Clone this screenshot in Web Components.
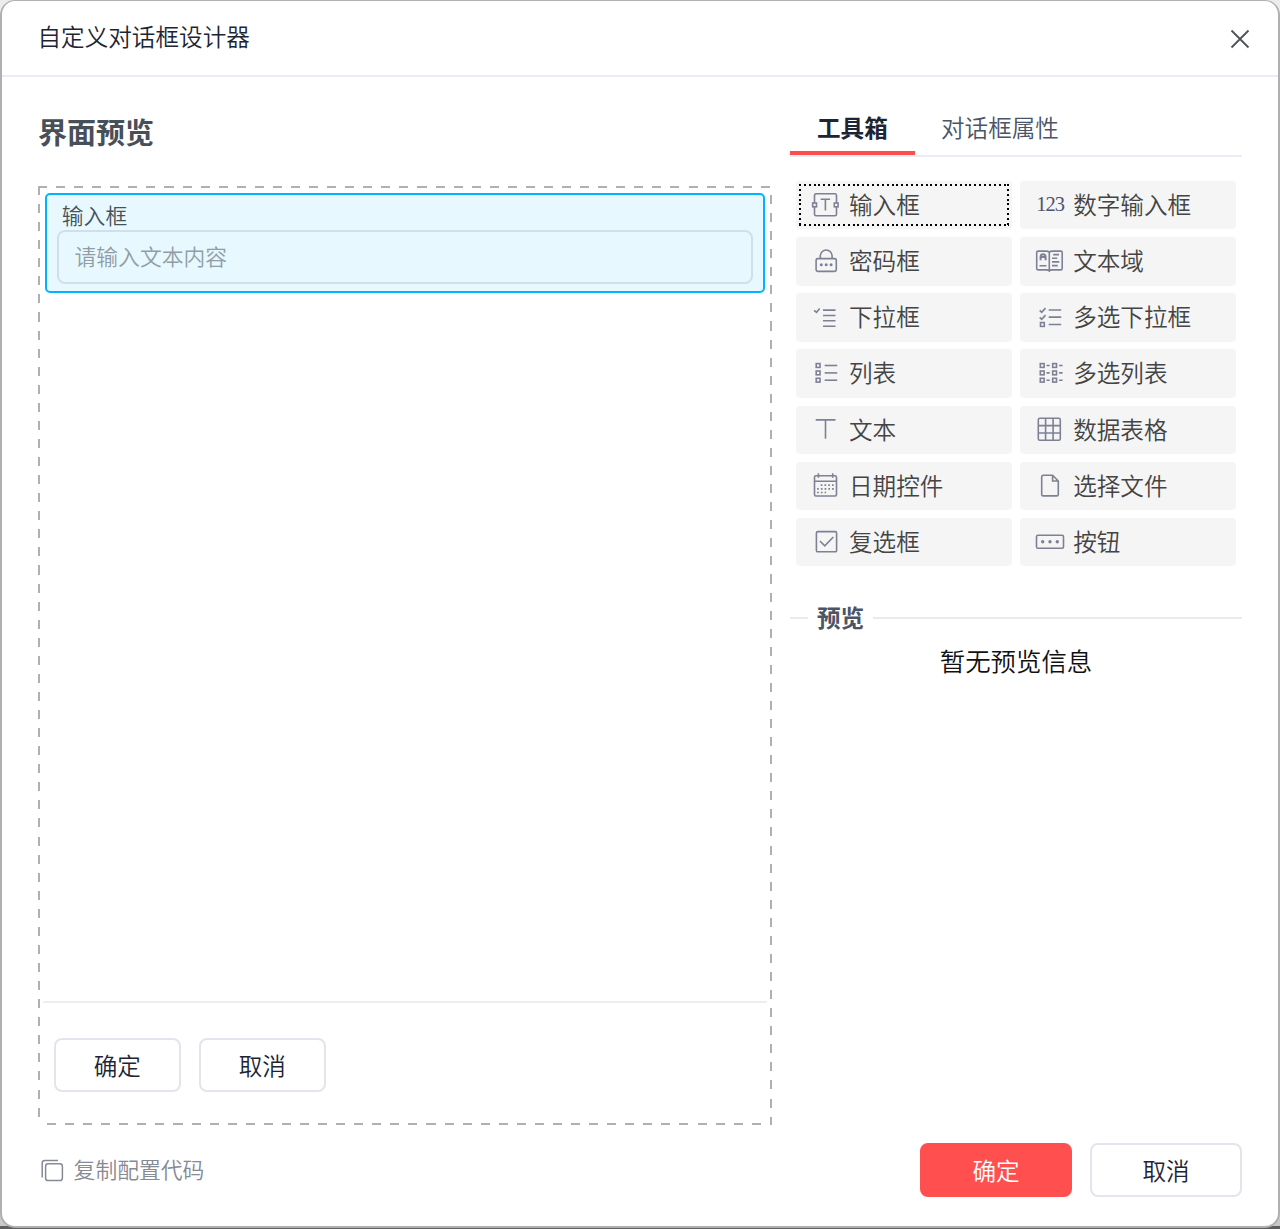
<!DOCTYPE html>
<html lang="zh-CN">
<head>
<meta charset="utf-8">
<title>自定义对话框设计器</title>
<style>
html,body{margin:0;height:1229px;overflow:hidden}
body{background:linear-gradient(#ececec,#c9c9c9 1226px,#5f5f61 1226px);font-family:"Liberation Sans","Noto Sans CJK SC",sans-serif;font-weight:350;color:#1d2535}
</style>
</head>
<body>
<designer-dialog></designer-dialog>
<script>
const define=(name,html)=>customElements.define(name,class extends HTMLElement{
  constructor(){
    super();
    const t=document.createElement('template');
    t.innerHTML=typeof html==='function'?html(this):html;
    this.attachShadow({mode:'open'}).append(t.content.cloneNode(true));
  }
});

const square=(x,y)=>`<rect x="${x}" y="${y-1.9}" width="3.8" height="3.8"/>`;
const rows=[6.5,13.9,21.2];
const dot=(x,y,r)=>`<circle cx="${x}" cy="${y}" r="${r}" fill="currentColor" stroke="none"/>`;
const icons={
  input:'<rect x="3.8" y="3.8" width="22" height="22" rx="1.6"/><path d="M10 9.2h9.4M14.7 9.2v11.4"/><g fill="#f5f5f5"><rect x="2" y="13" width="3.8" height="3.8"/><rect x="23.6" y="13" width="3.8" height="3.8"/></g>',
  number:'<text x="1.6" y="21.3" font-family="Liberation Serif" font-size="20.5" font-weight="400" letter-spacing="-1" fill="#4f536b" stroke="none">123</text>',
  password:'<rect x="5.4" y="12.6" width="20.2" height="12.8" rx="1.6"/><path d="M9.6 12.6V10a5.9 6 0 0 1 11.8 0v2.6"/>'+[10.6,15.5,20.4].map(x=>dot(x,18.8,1.5)).join(''),
  textarea:'<path d="M14.6 6.2C13.5 5.2 12.8 5.1 11.5 5.1H3.5Q2 5.1 2 6.6V22.4Q2 23.9 3.5 23.9H12Q13.8 23.9 14.6 25Q15.4 23.9 17.2 23.9H26Q27.5 23.9 27.5 22.4V6.6Q27.5 5.1 26 5.1H17.7C16.4 5.1 15.7 5.2 14.6 6.2V25M4.8 19.7h7M18.5 8.6h5.8M17.3 12.2h5.2M17.3 15.9h7.3M17.3 19.6h5.7"/><path d="M5.9 14.2V10.8a2.5 2.5 0 0 1 5 0v3.4M6 11h4.8" stroke-width="2"/>',
  select:'<path d="M3.4 7.3l2.4 2 3.2-3.7M12.3 7.1h12.5M12.3 12.5h12.5M12.3 17.8h12.5M12.3 23.3h12.5"/>',
  multiselect:'<path d="M5 7.4l2 1.9 3.8-4.2M5 14.4l2 1.9 3.8-4.2M14 7h12.5M14 14.1h12.5M14 21.5h12.5"/>'+square(5.8,21.5),
  list:rows.map(y=>square(5.5,y)+`<path d="M14 ${y}h12.5"/>`).join(''),
  multilist:rows.map(y=>square(5.6,y)+square(18,y)+`<path d="M11.8 ${y}h3.2M24.4 ${y}h3.5"/>`).join(''),
  text:'<path d="M5 4.9h19.8M14.8 4.9v18.9"/>',
  table:'<rect x="3.6" y="3.3" width="22" height="22" rx="1.6"/><path d="M10.9 3.3v22M18.4 3.3v22M3.6 10.6h22M3.6 18h22"/>',
  date:'<rect x="3.8" y="4.8" width="22" height="20.2" rx="1.4"/><path d="M3.8 10.2h22M7.7 2.2v4.6M22 2.2v4.6"/><path d="M10 14.1h13.5M6.4 17.8h17M6.4 21.5h9" stroke-width="1.7" stroke-dasharray="1.7 2.05"/>',
  file:'<path d="M8.7 4.2h9.2l5.7 5.8v13.2q0 1.7-1.7 1.7H8.7Q7 24.9 7 23.2V5.9Q7 4.2 8.7 4.2M17.9 4.2v5.8h5.7"/>',
  checkbox:'<rect x="5.7" y="4.6" width="20.2" height="20.2" rx="1.4"/><path d="M9.2 14l4.9 4.9 8.5-8.9"/>',
  button:'<rect x="1.8" y="8.3" width="27" height="13" rx="1.5"/>'+[8,15.3,22.6].map(x=>dot(x,14.8,1.7)).join('')
};

define('tool-item',el=>`<style>
:host{display:flex;align-items:center;width:216.6px;height:48.4px;box-sizing:border-box;padding-left:15px;background:#f5f5f5;border-radius:4px;color:#444;font-size:23.6px;gap:8.4px}
:host([focused]){
--h:repeating-linear-gradient(90deg,#000 0 2px,transparent 2px 4.87px);
--v:repeating-linear-gradient(#000 0 2px,transparent 2px 4.87px);
background:var(--h) 3.4px 3px/210px 2px no-repeat,var(--h) 3.4px 43px/210px 2px no-repeat,var(--v) 3.4px 3px/2px 42px no-repeat,var(--v) 211.4px 3px/2px 42px no-repeat,#f5f5f5}
svg{width:30px;height:30px;flex:none;color:#7e8194;overflow:visible}
span{white-space:nowrap;padding-bottom:2.6px}
</style><svg viewBox="0.3 0 30 30" fill="none" stroke="currentColor" stroke-width="1.6">${icons[el.getAttribute('icon')]}</svg><span><slot></slot></span>`);

define('tool-grid',`<style>
:host{display:grid;grid-template-columns:216.6px 216.6px;column-gap:7.6px;row-gap:7.77px;padding:24px 0 0 5.6px}
</style>
<tool-item icon="input" focused>输入框</tool-item><tool-item icon="number">数字输入框</tool-item>
<tool-item icon="password">密码框</tool-item><tool-item icon="textarea">文本域</tool-item>
<tool-item icon="select">下拉框</tool-item><tool-item icon="multiselect">多选下拉框</tool-item>
<tool-item icon="list">列表</tool-item><tool-item icon="multilist">多选列表</tool-item>
<tool-item icon="text">文本</tool-item><tool-item icon="table">数据表格</tool-item>
<tool-item icon="date">日期控件</tool-item><tool-item icon="file">选择文件</tool-item>
<tool-item icon="checkbox">复选框</tool-item><tool-item icon="button">按钮</tool-item>`);

define('tab-bar',`<style>
:host{display:flex;height:80px;box-sizing:border-box;border-bottom:2px solid #ebebf5;font-size:23.6px;color:#4a5568}
div{height:78px;box-sizing:border-box;padding:0 26px;line-height:104px}
.on{width:125px;padding-left:27px;font-weight:700;color:#1d2535;border-bottom:4px solid #ff4d4f}
</style><div class="on">工具箱</div><div>对话框属性</div>`);

define('preview-info',`<style>
:host{display:flex;flex-direction:column;margin-top:34px}
.legend{display:flex;align-items:center;gap:9px;height:36px;font-size:23.6px;font-weight:700;color:#4a5568}
.legend span{padding-bottom:2px}
i{height:2px;background:#ebebed;width:18px}
i:last-child{flex:1;width:auto}
p{margin:7px 0 0;text-align:center;font-size:25.4px;line-height:38px;color:#111}
</style><div class="legend"><i></i><span>预览</span><i></i></div><p>暂无预览信息</p>`);

define('ui-button',`<style>
:host{display:flex;align-items:center;justify-content:center;box-sizing:border-box;width:126.5px;height:54px;border:2px solid #e4e4ec;border-radius:8px;background:#fff;color:#1d2535;font-size:23.6px}
:host([large]){width:152px}
:host([primary]){background:#ff4f4f;border-color:#ff4f4f;color:#fff}
</style><slot></slot>`);

define('input-field',`<style>
:host{display:flex;flex-direction:column;box-sizing:border-box;height:100px;margin:7px 7px 0;padding:5px 10px 0;border:2px solid #00b4ff;border-radius:5px;background:#e8f8ff}
label{font-size:21.8px;line-height:34px;height:30px;padding-left:4.8px;color:#47515a}
div{box-sizing:border-box;height:54px;border:2px solid #d0dfec;border-radius:8px;padding-left:15.5px;font-size:21.8px;line-height:52px;color:#919da6}
</style><label>输入框</label><div>请输入文本内容</div>`);

define('design-canvas',`<style>
:host{display:flex;flex-direction:column;box-sizing:border-box;width:734px;height:939px;
--h:repeating-linear-gradient(90deg,#b0b0b0 0 9.03px,transparent 9.03px 18.07px);
--v:repeating-linear-gradient(#b0b0b0 0 9.03px,transparent 9.03px 18.07px);
background:var(--h) 0 0/732px 2px no-repeat,var(--v) 0 0/2px 931px no-repeat,var(--h) 9px 100%/725px 2px no-repeat,var(--v) 100% 9px/2px 930px no-repeat}
.space{flex:1}
.actions{display:flex;gap:18.5px;border-top:2px solid #eee;margin:0 5px;padding:35px 0 33px 11px}
</style><input-field></input-field><div class="space"></div><div class="actions"><ui-button>确定</ui-button><ui-button>取消</ui-button></div>`);

define('dialog-header',`<style>
:host{display:flex;justify-content:space-between;align-items:center;box-sizing:border-box;height:76px;border-bottom:2px solid #ebecf3;padding:0 28px 0 35.5px;font-size:23.6px}
span{line-height:36px}
svg{width:20px;height:20px;margin-top:1px}
</style><span>自定义对话框设计器</span><svg viewBox="0 0 20 20" fill="none" stroke="#505155" stroke-width="1.8"><path d="M1.5 1.5l17 17M18.5 1.5l-17 17"/></svg>`);

define('dialog-footer',`<style>
:host{display:flex;align-items:center;gap:18px;padding:18px 36px 0}
.copy{display:flex;align-items:center;gap:9.6px;flex:1;padding-left:3px;font-size:21.8px;color:#858a94}
.copy span{padding-bottom:3px}
svg{width:23px;height:23px}
</style><div class="copy"><svg viewBox="0 0 23 23" fill="none" stroke="currentColor" stroke-width="1.5"><rect x="4.6" y="4.8" width="16.8" height="16.8" rx="2.6"/><path d="M1.2 18.5V4Q1.2 1.4 3.8 1.4H17"/></svg><span>复制配置代码</span></div><ui-button primary large>确定</ui-button><ui-button large>取消</ui-button>`);

define('designer-dialog',`<style>
:host{display:flex;flex-direction:column;box-sizing:border-box;width:1280px;height:1228px;border:2px solid #b0b0b0;border-top-width:1px;border-radius:15px;background:#fff}
.body{display:flex;gap:18px;padding:0 36px;height:1048px}
h2{margin:0;height:109px;box-sizing:border-box;padding-top:35px;font-size:29px;line-height:44px;font-weight:700;color:#474f59}
.side{width:452px}
</style><dialog-header></dialog-header>
<div class="body"><div><h2>界面预览</h2><design-canvas></design-canvas></div><div class="side"><tab-bar></tab-bar><tool-grid></tool-grid><preview-info></preview-info></div></div>
<dialog-footer></dialog-footer>`);
</script>
</body>
</html>
